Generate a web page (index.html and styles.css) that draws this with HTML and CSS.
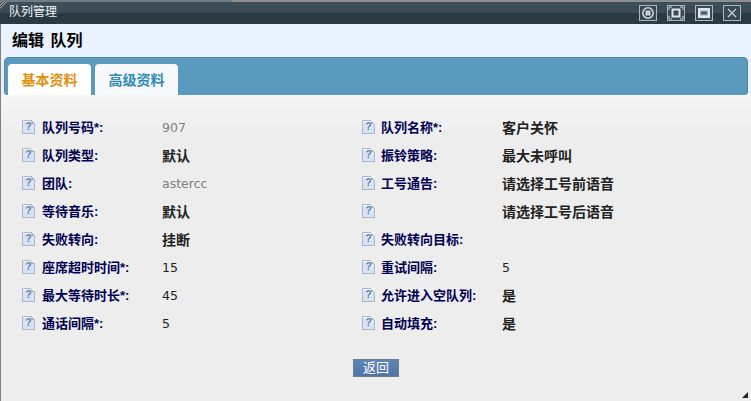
FILE: index.html
```html
<!DOCTYPE html>
<html lang="zh">
<head>
<meta charset="utf-8">
<title>队列管理</title>
<link rel="stylesheet" href="styles.css">
</head>
<body>
<div class="window">
  <div class="topline"></div>
  <header class="titlebar">
    <span class="grip"></span>
    <span class="title">队列管理</span>
    <div class="controls">
      <span class="ctl"><svg width="18" height="16" viewBox="0 0 18 16"><circle cx="9" cy="8" r="5.2" fill="none" stroke="#c9d2d8" stroke-width="1.6"/><rect x="6.5" y="5.5" width="5" height="5" fill="#c9d2d8"/></svg></span>
      <span class="ctl"><svg width="18" height="16" viewBox="0 0 18 16"><rect x="5.5" y="4.5" width="7" height="7" fill="none" stroke="#dfe5e9" stroke-width="2"/><path d="M2 5V2h3M13 2h3v3M16 11v3h-3M5 14H2v-3" fill="none" stroke="#c9d2d8"/></svg></span>
      <span class="ctl"><svg width="18" height="16" viewBox="0 0 18 16"><rect x="3" y="3" width="12" height="10" fill="#dfe5e9"/><rect x="5.5" y="6" width="7" height="4" fill="#4a6070" stroke="#9fb0bc"/></svg></span>
      <span class="ctl"><svg width="18" height="16" viewBox="0 0 18 16"><path d="M5 4l8 8M13 4l-8 8" stroke="#c9d2d8" stroke-width="1.2"/></svg></span>
    </div>
  </header>
  <main class="panel">
    <h1 class="heading">编辑 队列</h1>
    <nav class="tabs">
      <a class="tab tab-active">基本资料</a>
      <a class="tab">高级资料</a>
    </nav>
    <section class="content">
      <div class="form">
        <span class="ico">?</span><label class="lbl">队列号码*:</label><span class="val num muted">907</span>
        <span class="ico">?</span><label class="lbl">队列名称*:</label><span class="val">客户关怀</span>

        <span class="ico">?</span><label class="lbl">队列类型:</label><span class="val">默认</span>
        <span class="ico">?</span><label class="lbl">振铃策略:</label><span class="val">最大未呼叫</span>

        <span class="ico">?</span><label class="lbl">团队:</label><span class="val num muted">astercc</span>
        <span class="ico">?</span><label class="lbl">工号通告:</label><span class="val">请选择工号前语音</span>

        <span class="ico">?</span><label class="lbl">等待音乐:</label><span class="val">默认</span>
        <span class="ico">?</span><label class="lbl"></label><span class="val">请选择工号后语音</span>

        <span class="ico">?</span><label class="lbl">失败转向:</label><span class="val">挂断</span>
        <span class="ico">?</span><label class="lbl">失败转向目标:</label><span class="val"></span>

        <span class="ico">?</span><label class="lbl">座席超时时间*:</label><span class="val num">15</span>
        <span class="ico">?</span><label class="lbl">重试间隔:</label><span class="val num">5</span>

        <span class="ico">?</span><label class="lbl">最大等待时长*:</label><span class="val num">45</span>
        <span class="ico">?</span><label class="lbl">允许进入空队列:</label><span class="val">是</span>

        <span class="ico">?</span><label class="lbl">通话间隔*:</label><span class="val num">5</span>
        <span class="ico">?</span><label class="lbl">自动填充:</label><span class="val">是</span>
      </div>
      <div class="actions"><button class="back" type="button">返回</button></div>
    </section>
  </main>
  <svg class="resize" width="8" height="8" viewBox="0 0 8 8"><path d="M7 1v6H1z" fill="#222"/></svg>
</div>
</body>
</html>
```

FILE: styles.css
```css
* { box-sizing: border-box; }
html, body { margin: 0; padding: 0; }
body {
  width: 751px;
  height: 401px;
  overflow: hidden;
  font-family: "Liberation Sans", "Noto Sans CJK SC", sans-serif;
  background: #efefef;
}
.window { position: relative; width: 751px; height: 401px; display: flex; flex-direction: column; }
.topline { height: 2px; background: linear-gradient(90deg, #6f7c88 0 232px, #8c8c8c 232px); }
.titlebar {
  height: 22px;
  display: flex;
  align-items: center;
  padding-left: 9px;
  background: linear-gradient(#3f4f5a 0, #3a4a55 50%, #2a3841 52%, #2c3a43 100%);
  position: relative;
}
.grip {
  position: absolute; left: 0; top: 0; width: 7px; height: 7px;
  background: repeating-linear-gradient(135deg, #9a9a9a 0 1px, #333 1px 2px);
  clip-path: polygon(0 0, 100% 0, 0 100%);
}
.title { color: #f0f4f6; font-size: 12px; line-height: 16px; margin-bottom: 3px; }
.controls { margin-left: auto; display: flex; gap: 10px; padding-right: 10px; }
.ctl {
  width: 18px; height: 16px; display: block;
  outline: 1px solid #aab6be; outline-offset: -1px;
  background: #3a4a55;
}
.ctl svg { display: block; }
.panel { flex: 1; display: flex; flex-direction: column; border-left: 1px solid #808080; min-height: 0; }
.heading {
  margin: 0; height: 33px; padding: 7px 0 0 11px;
  background: #e8f3ff; color: #000;
  font-size: 16px; font-weight: bold; line-height: 20px;
  word-spacing: 2px;
}
.tabs {
  height: 38px;
  margin: 0 3px 0 3px;
  padding: 6px 0 0 3px;
  background: #5b9abf;
  border: 1px solid #4a86ab;
  border-bottom: none;
  border-radius: 5px 5px 4px 4px;
  display: flex;
  gap: 4px;
}
.tab {
  width: 83px; height: 31px;
  background: #f6f8fa;
  border-radius: 4px 4px 0 0;
  color: #2f8ab5;
  font-size: 14px; font-weight: bold;
  text-align: center; line-height: 32px;
}
.tab-active { background: #fff; color: #e0900f; }
.content { flex: 1; background: linear-gradient(#f6f6f6, #ededed 40px); display: flex; flex-direction: column; }
.form {
  padding: 19px 0 0 21px;
  display: grid;
  grid-template-columns: 20px 120px 200px 19px 121px 1fr;
  grid-auto-rows: 28px;
  align-items: center;
}
.ico {
  position: relative;
  width: 13px; height: 14px; display: block; margin-top: -3px;
  border: 1px solid #a9bad0;
  background: linear-gradient(#f4f7fb 0 1px, #d8e4f2 1px 12px, #f4f7fb 12px);
  color: #5f82aa;
  font: bold 10px/12px "Liberation Sans", sans-serif;
  text-align: center;
}
.ico::after {
  content: "";
  position: absolute; right: -1px; top: -1px;
  width: 4px; height: 4px;
  background: linear-gradient(45deg, #a9bad0 0 50%, #f2f2f2 50%);
}
.lbl { font-size: 13px; font-weight: bold; color: #000050; line-height: 16px; }
.val { font-size: 14px; font-weight: bold; color: #222; line-height: 16px; }
.num { font-family: "DejaVu Sans", sans-serif; font-size: 12.5px; font-weight: normal; color: #222; }
.muted { color: #808080; }
.actions { display: flex; justify-content: center; padding-top: 21px; }
.back {
  width: 46px; height: 18px; padding: 0;
  border: 1px solid #6d7d90;
  background: linear-gradient(#5f87b5, #4d74a6);
  color: #fff; font: 13px/16px "Liberation Sans", "Noto Sans CJK SC", sans-serif;
}
.resize { position: absolute; right: 2px; bottom: 2px; }
```
